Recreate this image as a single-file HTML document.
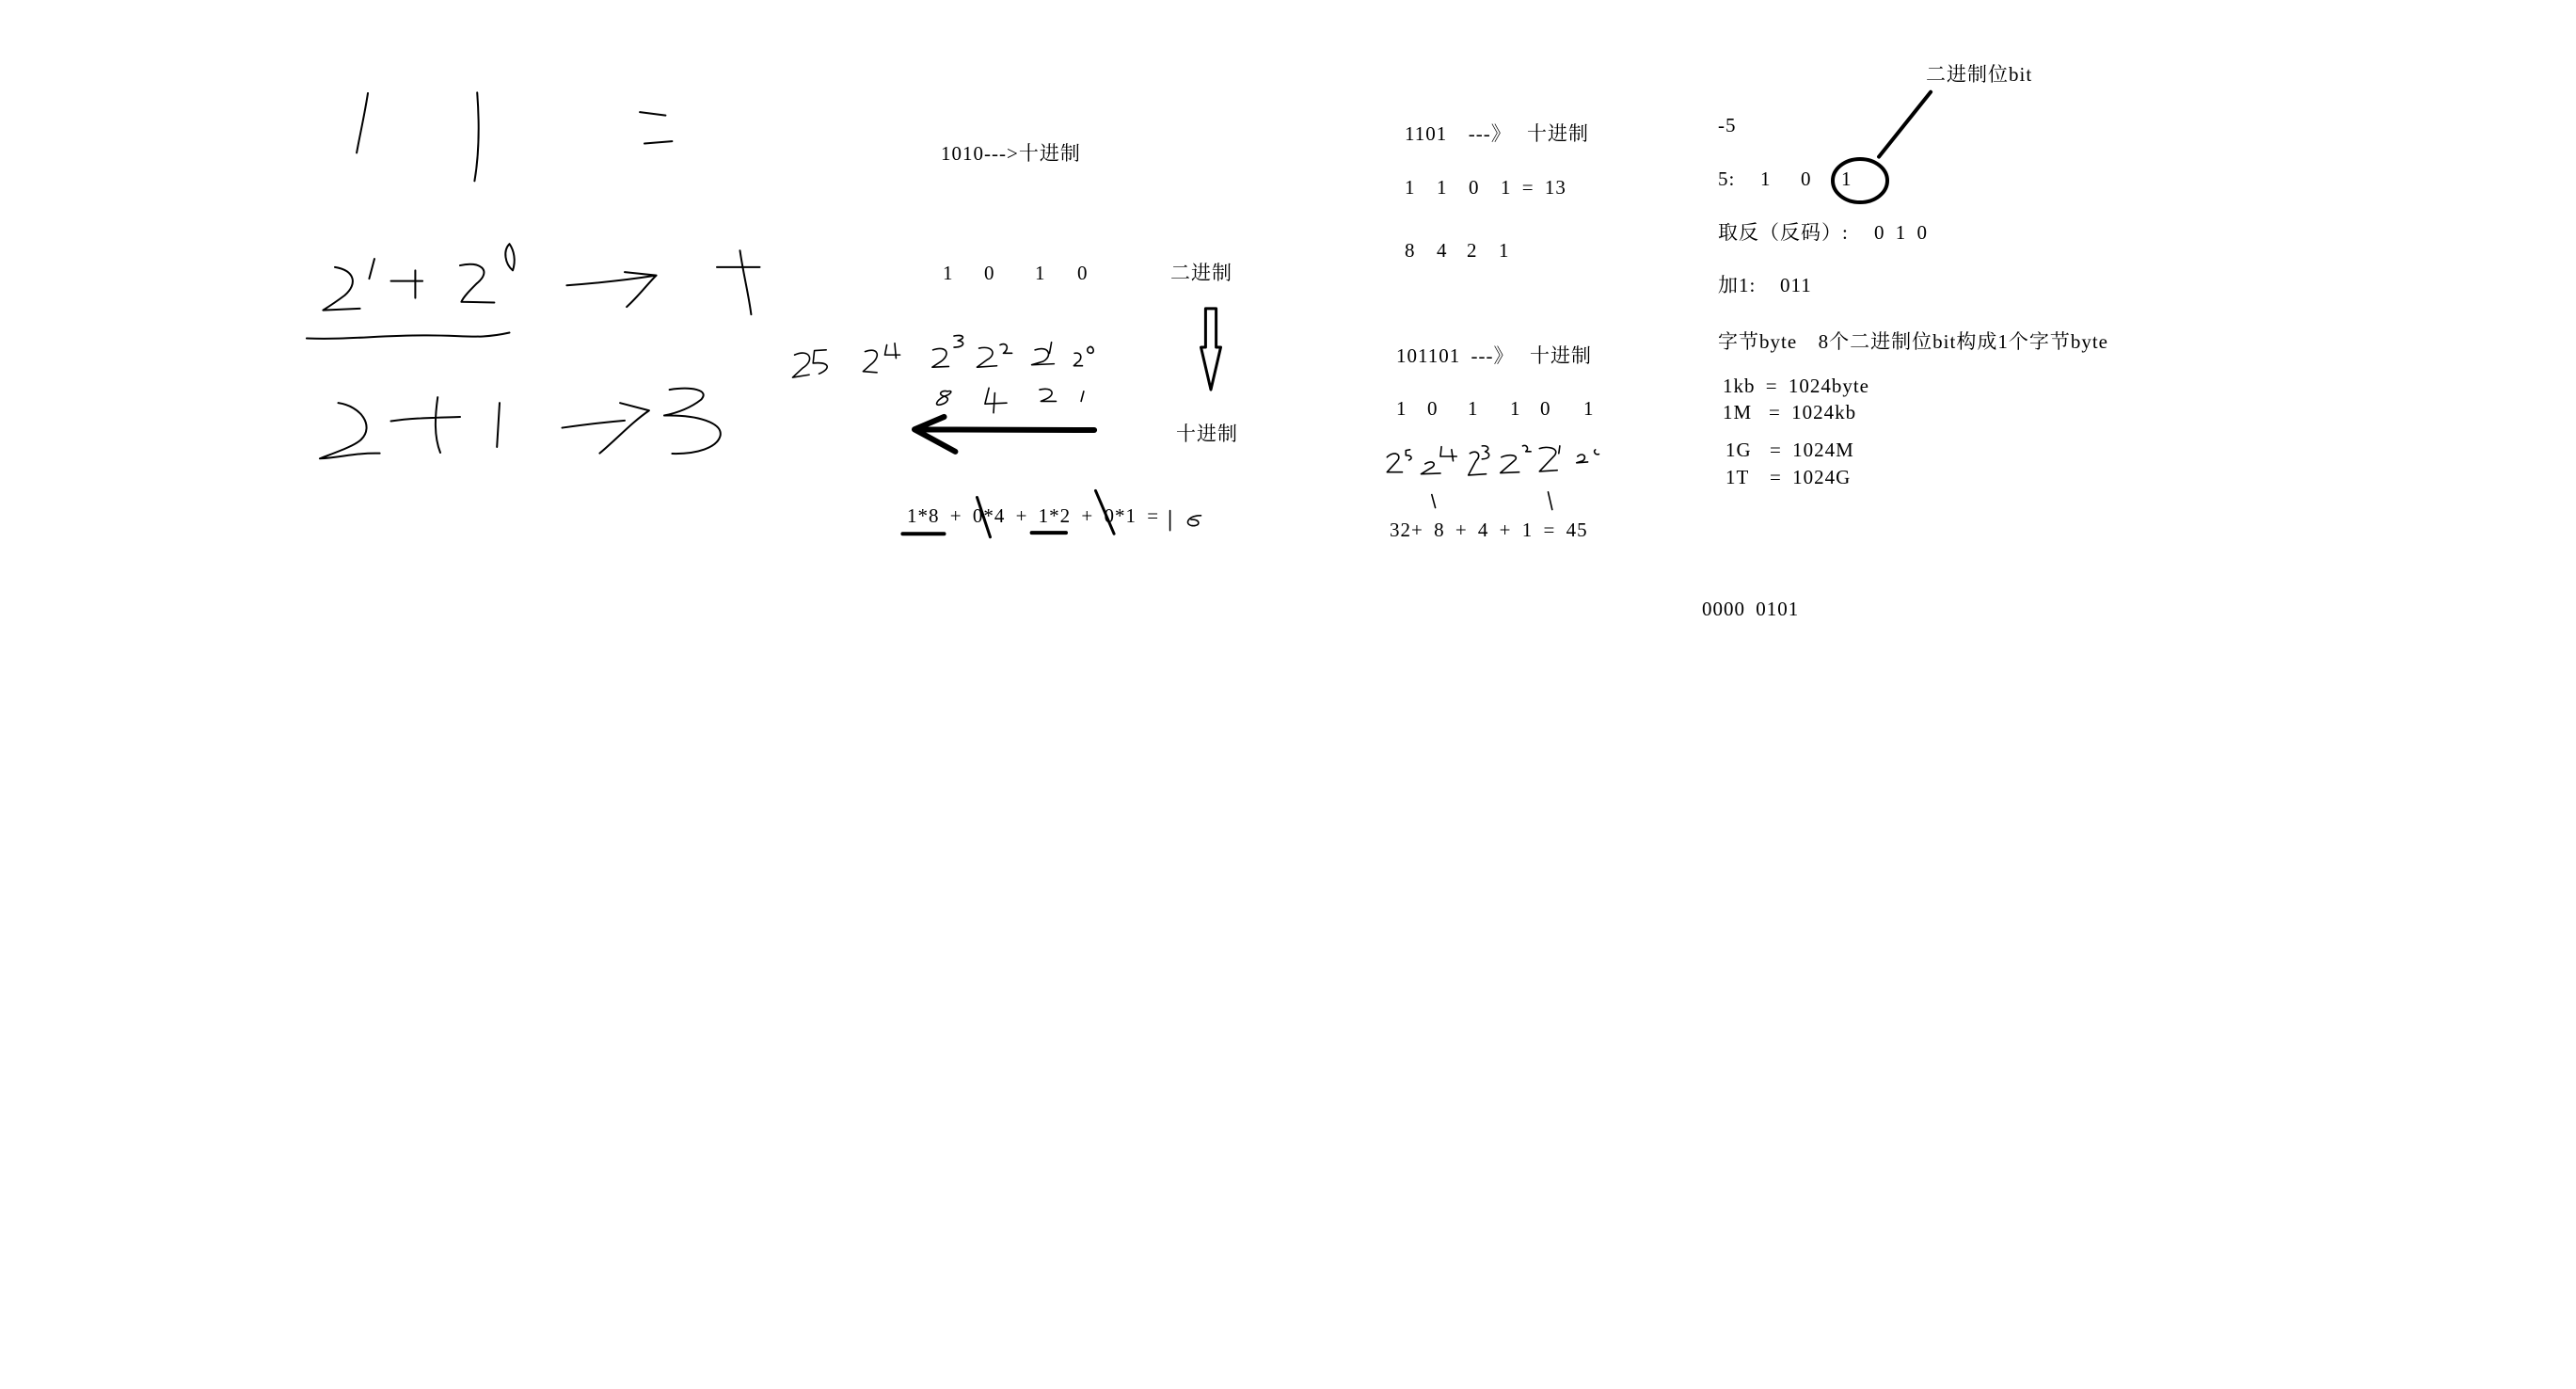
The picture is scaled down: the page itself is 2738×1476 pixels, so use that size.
<!DOCTYPE html>
<html><head><meta charset="utf-8">
<style>
html,body{margin:0;padding:0;background:#fff;}
body{width:2738px;height:1476px;position:relative;overflow:hidden;font-family:"Liberation Serif","Noto Serif CJK SC",serif;font-size:21px;color:#000;}
.t{position:absolute;white-space:pre;line-height:24px;letter-spacing:1px;word-spacing:5px;}
svg{position:absolute;left:0;top:0;}
path,ellipse{fill:none;stroke:#000;stroke-linecap:round;stroke-linejoin:round;}
</style></head><body>
<svg width="2738" height="1476" viewBox="0 0 2738 1476">
<g transform="translate(300 48) scale(0.7 0.352)">
<path vector-effect="non-scaling-stroke" stroke-width="2" d="M130,145 C125,210 118,270 113,325"/>
<path vector-effect="non-scaling-stroke" stroke-width="2" d="M296,143 C300,250 298,340 292,410"/>
<path vector-effect="non-scaling-stroke" stroke-width="2" d="M543,202 L582,212 M550,297 L592,290"/>
<path vector-effect="non-scaling-stroke" stroke-width="2" d="M80,670 C110,680 115,720 95,755 C85,770 70,790 62,800 L118,795"/>
<path vector-effect="non-scaling-stroke" stroke-width="2" d="M140,645 L132,705 M165,712 L213,712 M202,680 L202,763"/>
<path vector-effect="non-scaling-stroke" stroke-width="2" d="M270,665 C300,650 320,680 295,720 C285,740 275,760 272,775 L322,777"/>
<path vector-effect="non-scaling-stroke" stroke-width="2" d="M345,600 C335,620 338,660 350,680 C355,650 352,620 345,600"/>
<path vector-effect="non-scaling-stroke" stroke-width="2" d="M37,885 C100,890 150,875 220,876 C280,876 300,888 345,868"/>
<path vector-effect="non-scaling-stroke" stroke-width="2" d="M432,725 C480,718 520,710 568,695 M520,685 L568,695 C555,720 540,760 523,790"/>
<path vector-effect="non-scaling-stroke" stroke-width="2" d="M660,670 L725,670 M695,620 C700,690 708,750 712,813"/>
<path vector-effect="non-scaling-stroke" stroke-width="2" d="M85,1080 C120,1090 140,1150 120,1190 C110,1210 80,1230 57,1248 C90,1245 110,1230 148,1232"/>
<path vector-effect="non-scaling-stroke" stroke-width="2" d="M165,1135 C200,1125 230,1125 270,1122 M236,1063 C232,1120 230,1180 240,1230 M330,1080 L326,1213"/>
<path vector-effect="non-scaling-stroke" stroke-width="2" d="M425,1155 C460,1145 490,1138 520,1133 M513,1080 L557,1103 C530,1140 510,1185 482,1232"/>
<path vector-effect="non-scaling-stroke" stroke-width="2" d="M588,1040 C620,1030 650,1040 636,1070 C620,1095 600,1110 580,1118 C630,1115 670,1140 665,1180 C660,1215 630,1235 592,1233"/>
<path vector-effect="non-scaling-stroke" stroke-width="1.6" d="M778,935 C800,915 810,950 790,975 L775,1003 L800,995 M826,920 L808,922 L806,960 C830,955 835,975 815,992"/>
<path vector-effect="non-scaling-stroke" stroke-width="1.6" d="M885,925 C905,910 910,940 893,965 L882,985 L903,988 M918,905 L915,935 L938,935 M930,900 L932,945"/>
<path vector-effect="non-scaling-stroke" stroke-width="1.6" d="M988,920 C1010,905 1015,935 1000,955 L987,972 L1012,970 M1020,878 C1035,872 1038,885 1026,892 C1038,895 1036,912 1020,912"/>
<path vector-effect="non-scaling-stroke" stroke-width="1.6" d="M1058,915 C1080,905 1085,935 1070,950 L1055,972 L1085,968 M1090,905 C1100,895 1105,915 1095,930 L1108,930"/>
<path vector-effect="non-scaling-stroke" stroke-width="1.6" d="M1143,920 C1165,905 1170,940 1155,955 L1138,965 L1172,962 M1168,897 L1165,930"/>
<path vector-effect="non-scaling-stroke" stroke-width="1.6" d="M1203,930 C1215,925 1215,950 1207,958 L1202,968 L1215,968 M1227,910 C1220,915 1222,930 1228,930 C1234,928 1232,912 1227,910"/>
<path vector-effect="non-scaling-stroke" stroke-width="1.6" d="M1010,1045 C1000,1040 995,1055 1005,1060 C1015,1065 1010,1080 1000,1085 C990,1090 992,1075 1005,1060 C1015,1055 1020,1040 1010,1045"/>
<path vector-effect="non-scaling-stroke" stroke-width="1.6" d="M1073,1035 L1067,1083 L1100,1080 M1082,1050 L1080,1110 M1150,1040 C1170,1030 1175,1055 1160,1068 L1152,1075 L1175,1075 M1217,1045 L1213,1075"/>
<path vector-effect="non-scaling-stroke" stroke-width="6" d="M1233,1162 L965,1160 M1005,1122 L960,1160 L1022,1227"/>
<path vector-effect="non-scaling-stroke" stroke-width="3" d="M1402,795 L1418,795 L1418,912 L1425,912 L1410,1040 L1395,912 L1402,912 Z"/>
<path vector-effect="non-scaling-stroke" stroke-width="4" d="M942,1475 L1005,1475 M1138,1472 L1190,1472"/>
<path vector-effect="non-scaling-stroke" stroke-width="3" d="M1055,1365 L1075,1485 M1235,1345 L1263,1475"/>
<path vector-effect="non-scaling-stroke" stroke-width="1.6" d="M1348,1405 L1348,1465 M1395,1420 C1375,1420 1370,1445 1380,1450 C1395,1455 1395,1430 1380,1432"/>
</g>
<g transform="translate(1450 48) scale(0.54 0.398)">
<path vector-effect="non-scaling-stroke" stroke-width="1.6" d="M45,1100 C60,1080 75,1095 65,1110 L45,1140 L75,1140 M90,1080 L82,1082 L82,1095 C95,1095 95,1105 88,1108"/>
<path vector-effect="non-scaling-stroke" stroke-width="1.6" d="M120,1118 C135,1105 145,1120 130,1130 L112,1145 L150,1143 M152,1072 L150,1098 L182,1098 M172,1080 L175,1110"/>
<path vector-effect="non-scaling-stroke" stroke-width="1.6" d="M208,1090 C222,1078 232,1095 220,1110 L205,1148 L240,1145 M232,1070 C245,1068 248,1080 238,1085 C250,1090 248,1105 232,1105"/>
<path vector-effect="non-scaling-stroke" stroke-width="1.6" d="M270,1100 C285,1090 308,1095 295,1110 L268,1142 L305,1140 M312,1070 C320,1065 325,1078 318,1085 L328,1085"/>
<path vector-effect="non-scaling-stroke" stroke-width="1.6" d="M345,1077 C360,1070 385,1075 375,1095 L345,1138 L380,1135 M385,1070 L383,1090"/>
<path vector-effect="non-scaling-stroke" stroke-width="1.6" d="M420,1098 C430,1085 440,1100 430,1110 L418,1115 L440,1113 M455,1080 C450,1085 455,1095 462,1092"/>
<path vector-effect="non-scaling-stroke" stroke-width="1.6" d="M133,1200 L140,1235 M362,1193 L370,1240"/>
<path vector-effect="non-scaling-stroke" stroke-width="4" d="M1115,125 L1013,298"/>
</g>
<ellipse cx="1977" cy="192" rx="29" ry="23" stroke-width="4"/>
</svg>

<div class="t" style="left:1000px;top:151px">1010---&gt;十进制</div>
<div class="t" style="left:1002px;top:278px">1</div>
<div class="t" style="left:1046px;top:278px">0</div>
<div class="t" style="left:1100px;top:278px">1</div>
<div class="t" style="left:1145px;top:278px">0</div>
<div class="t" style="left:1244px;top:278px">二进制</div>
<div class="t" style="left:1250px;top:449px">十进制</div>
<div class="t" style="left:964px;top:536px">1*8 + 0*4 + 1*2 + 0*1 =</div>

<div class="t" style="left:1493px;top:130px">1101  ---》</div>
<div class="t" style="left:1623px;top:130px">十进制</div>
<div class="t" style="left:1493px;top:187px">1  1  0  1 = 13</div>
<div class="t" style="left:1493px;top:254px">8</div>
<div class="t" style="left:1527px;top:254px">4</div>
<div class="t" style="left:1559px;top:254px">2</div>
<div class="t" style="left:1593px;top:254px">1</div>
<div class="t" style="left:1484px;top:366px">101101 ---》</div>
<div class="t" style="left:1626px;top:366px">十进制</div>
<div class="t" style="left:1484px;top:422px">1</div>
<div class="t" style="left:1517px;top:422px">0</div>
<div class="t" style="left:1560px;top:422px">1</div>
<div class="t" style="left:1605px;top:422px">1</div>
<div class="t" style="left:1637px;top:422px">0</div>
<div class="t" style="left:1683px;top:422px">1</div>
<div class="t" style="left:1477px;top:551px">32+ 8 + 4 + 1 = 45</div>

<div class="t" style="left:2047px;top:67px">二进制位bit</div>
<div class="t" style="left:1826px;top:121px">-5</div>
<div class="t" style="left:1826px;top:178px">5:</div>
<div class="t" style="left:1871px;top:178px">1</div>
<div class="t" style="left:1914px;top:178px">0</div>
<div class="t" style="left:1957px;top:178px">1</div>
<div class="t" style="left:1826px;top:235px">取反（反码）:</div>
<div class="t" style="left:1992px;top:235px">0 1 0</div>
<div class="t" style="left:1826px;top:291px">加1:</div>
<div class="t" style="left:1892px;top:291px">011</div>
<div class="t" style="left:1826px;top:351px">字节byte  8个二进制位bit构成1个字节byte</div>
<div class="t" style="left:1831px;top:398px">1kb = 1024byte</div>
<div class="t" style="left:1831px;top:426px">1M</div>
<div class="t" style="left:1880px;top:426px">= 1024kb</div>
<div class="t" style="left:1834px;top:466px">1G</div>
<div class="t" style="left:1881px;top:466px">= 1024M</div>
<div class="t" style="left:1834px;top:495px">1T</div>
<div class="t" style="left:1881px;top:495px">= 1024G</div>
<div class="t" style="left:1809px;top:635px">0000 0101</div>
</body></html>
